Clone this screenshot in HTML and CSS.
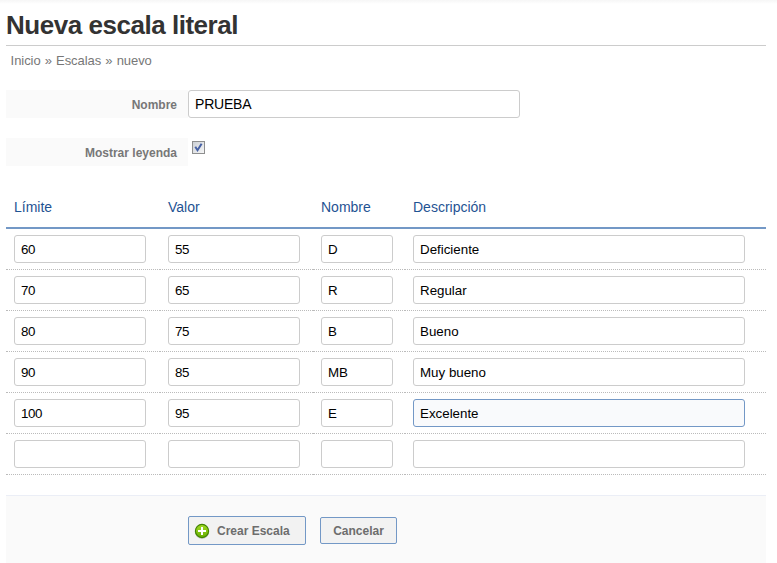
FILE: index.html
```html
<!DOCTYPE html>
<html lang="es">
<head>
<meta charset="utf-8">
<title>Nueva escala literal</title>
<link rel="stylesheet" href="styles.css">
</head>
<body>
<main class="page">
  <h1 class="title"><span>Nueva escala literal</span></h1>
  <nav class="breadcrumb"><span>Inicio » Escalas » nuevo</span></nav>
  <form>
    <div class="field">
      <label class="field-label" for="nombre"><span>Nombre</span></label>
      <input class="text-input field-input" id="nombre" type="text" value="PRUEBA">
    </div>
    <div class="field">
      <label class="field-label" for="leyenda"><span>Mostrar leyenda</span></label>
      <span class="checkbox" id="leyenda" role="checkbox" aria-checked="true">
        <svg width="9" height="9" viewBox="0 0 9 9"><path d="M1.3 3.8L3.5 7.2L7.6 .8" fill="none" stroke="#4661a5" stroke-width="2"/></svg>
      </span>
    </div>
    <div class="scale">
      <div class="row head"><div class="cell"><span>Límite</span></div><div class="cell"><span>Valor</span></div><div class="cell"><span>Nombre</span></div><div class="cell"><span>Descripción</span></div></div>
      <div class="row"><div class="cell"><input class="text-input medium" value="60"></div><div class="cell"><input class="text-input medium" value="55"></div><div class="cell"><input class="text-input small" value="D"></div><div class="cell"><input class="text-input large" value="Deficiente"></div></div>
      <div class="row"><div class="cell"><input class="text-input medium" value="70"></div><div class="cell"><input class="text-input medium" value="65"></div><div class="cell"><input class="text-input small" value="R"></div><div class="cell"><input class="text-input large" value="Regular"></div></div>
      <div class="row"><div class="cell"><input class="text-input medium" value="80"></div><div class="cell"><input class="text-input medium" value="75"></div><div class="cell"><input class="text-input small" value="B"></div><div class="cell"><input class="text-input large" value="Bueno"></div></div>
      <div class="row"><div class="cell"><input class="text-input medium" value="90"></div><div class="cell"><input class="text-input medium" value="85"></div><div class="cell"><input class="text-input small" value="MB"></div><div class="cell"><input class="text-input large" value="Muy bueno"></div></div>
      <div class="row"><div class="cell"><input class="text-input medium" value="100"></div><div class="cell"><input class="text-input medium" value="95"></div><div class="cell"><input class="text-input small" value="E"></div><div class="cell"><input class="text-input large active" value="Excelente"></div></div>
      <div class="row"><div class="cell"><input class="text-input medium"></div><div class="cell"><input class="text-input medium"></div><div class="cell"><input class="text-input small"></div><div class="cell"><input class="text-input large"></div></div>
    </div>
    <div class="actions">
      <button class="button create" type="button">
        <svg class="add-icon" width="16" height="16" viewBox="0 0 16 16">
          <defs><linearGradient id="green" x1="0" y1="0" x2="0" y2="1"><stop offset="0" stop-color="#a5dc26"/><stop offset="1" stop-color="#65ae00"/></linearGradient></defs>
          <circle cx="8" cy="8.6" r="7.2" fill="#b9bdb4"/>
          <circle cx="8" cy="8" r="6.6" fill="url(#green)" stroke="#418300" stroke-width="1.1"/>
          <path d="M8 4v8M4 8h8" stroke="#fff" stroke-width="2"/>
        </svg>
        <span>Crear Escala</span>
      </button>
      <button class="button cancel" type="button"><span>Cancelar</span></button>
    </div>
  </form>
</main>
</body>
</html>
```

FILE: styles.css
```css
* { box-sizing: border-box; }
body {
  margin: 0;
  height: 563px;
  overflow: hidden;
  background: linear-gradient(#f6f6f6, #fff 4px) no-repeat #fff;
  font-family: "Liberation Sans", Arial, sans-serif;
}
.page { width: 760px; margin-left: 6px; }
.title {
  height: 46px;
  margin: 0;
  padding-top: 10px;
  border-bottom: 1px solid #ccc;
  color: #333;
  font-size: 26px;
  letter-spacing: -0.47px;
  line-height: 30px;
}
.breadcrumb {
  height: 44px;
  padding: 7px 4.6px 0;
  color: #777;
  font-size: 13px;
  letter-spacing: -0.06px;
  word-spacing: 0.6px;
  line-height: 16px;
}
.field { display: flex; height: 28px; margin-bottom: 20px; }
.field-label {
  width: 182px;
  padding: 1px 11px 0 0;
  background: #fafafa;
  color: #777;
  font-size: 12px;
  font-weight: bold;
  line-height: 28px;
  text-align: right;
}
.text-input {
  display: block;
  height: 28px;
  margin: 0;
  padding: 0 6px;
  border: 1px solid #ccc;
  border-radius: 3px;
  outline: 0;
  background: #fff;
  color: #000;
  font: 13.33px "Liberation Sans", Arial, sans-serif;
}
.field-input { width: 332px; font-size: 14px; letter-spacing: -0.2px; }
.medium { width: 132px; letter-spacing: -0.4px; }
.small { width: 72px; }
.large { width: 332px; }
.active { border-color: #7398c6; background: #f9fafc; }
.checkbox {
  width: 13px;
  height: 13px;
  margin: 3px 0 0 4px;
  padding: 1px;
  border: 1px solid #8e8f8f;
  background: linear-gradient(135deg, #ccd0d5, #f6f6f6) padding-box;
}
.checkbox svg { display: block; }
.scale { margin-top: 20px; }
.row { display: grid; grid-template-columns: 154px 153px 92px 361px; }
.cell { padding: 6px 8px; border-bottom: 1px dotted #bbb; }
.head { height: 43px; }
.head .cell {
  padding: 11px 8px 0;
  border-bottom: 2px solid #7398c6;
  color: #1f5393;
  font-size: 14px;
  line-height: 20px;
}
.actions {
  display: flex;
  align-items: flex-start;
  gap: 14px;
  height: 68px;
  margin-top: 20px;
  padding: 20px 0 0 182px;
  border-top: 1px solid #ebeef6;
  background: #fafafa;
}
.button {
  display: flex;
  align-items: center;
  padding: 0;
  border: 1px solid #7398c6;
  border-radius: 2px;
  background: #f2f2f2;
  color: #6d6d6d;
  font: bold 12px "Liberation Sans", Arial, sans-serif;
}
.create { width: 118px; height: 29px; padding-left: 5px; gap: 7px; }
.cancel { width: 77px; height: 27px; margin-top: 1px; justify-content: center; }
```
